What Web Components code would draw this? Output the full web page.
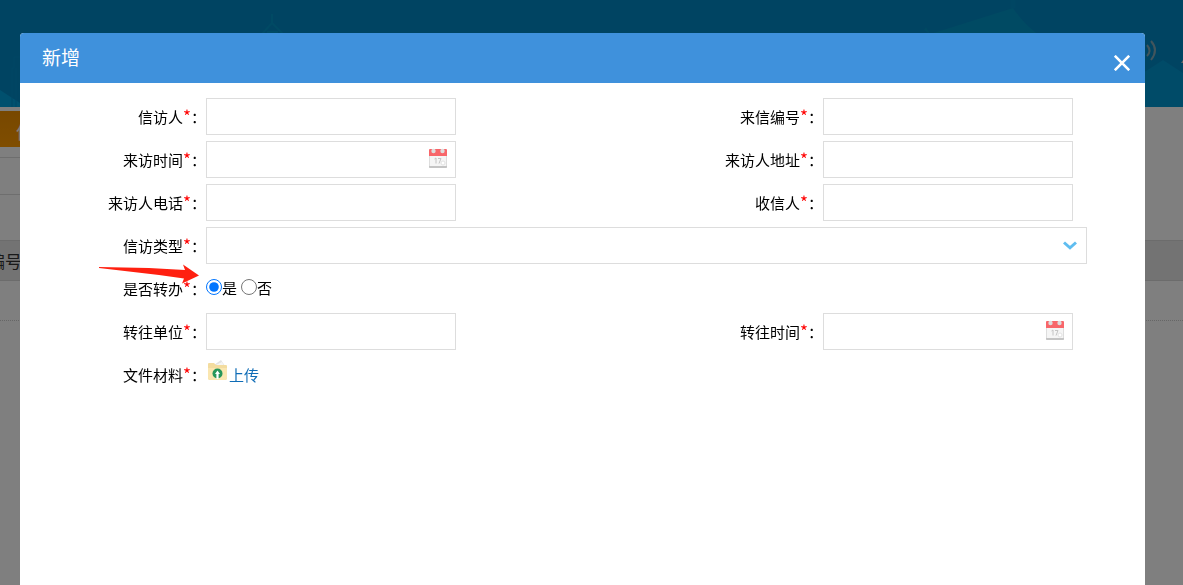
<!DOCTYPE html>
<html lang="zh-CN">
<head>
<meta charset="utf-8">
<meta name="viewport" content="width=device-width, initial-scale=1">
<title>新增</title>
<style>
    body {
        margin: 0;
        height: 100vh;
        overflow: hidden;
        background: #fff;
        color: #000;
        font: 15px/20px "Noto Sans CJK SC", "Liberation Sans", sans-serif;
    }
</style>
</head>
<body>
    <petition-list></petition-list>
    <modal-dialog heading="新增">
        <petition-form></petition-form>
    </modal-dialog>

<script>
// The list page that stays behind the dialog
class PetitionList extends HTMLElement {
    constructor() {
        super();
        this.attachShadow({ mode: "open" });
    }

    connectedCallback() {
        this.shadowRoot.innerHTML = /*html*/ `
            <header>
                <svg width="300" height="107" viewBox="0 0 300 107" aria-hidden="true">
                    <path d="M0 90 L20 103 L48 107 H0Z" fill="#00a0dc"/>
                    <path d="M12 107 V68 H14 V57 H24 V107 M16 107 V68" fill="none" stroke="#008dca"/>
                    <path d="M272 14 V23 L262 34 M272 23 L283 34 M267 32 H278" fill="none" stroke="#0094c8" stroke-width="2"/>
                </svg>
                <svg width="303" height="107" viewBox="0 0 303 107" aria-hidden="true">
                    <path d="M44 36 L133 8 Q145 26 163 38Z" fill="#0094c6"/>
                    <path d="M44 30 L46 27 L50 34" fill="#0092c4"/>
                    <path d="M133 0 V8" stroke="#008dc6" stroke-width="5"/>
                    <path d="M255 78 L283 60 L303 73 V107 H255Z" fill="#0096d0"/>
                    <path d="M267 45 q5 6 0 11 M271 41 q8 9 0 19" fill="none" stroke="#84aab8" stroke-width="2"/>
                    <path d="M301 63 l2 -3 v3z" fill="#ccc"/>
                </svg>
            </header>
            <nav><a href="#list">信访</a></nav>
            <div class="filter"></div>
            <div class="tools"></div>
            <table>
                <thead><tr><th>编号</th></tr></thead>
                <tbody><tr><td></td></tr></tbody>
            </table>
            ${this.getStyle()}
        `;
    }

    getStyle() {
        return /*html*/ `
            <style>
                :host {
                    display: block;
                }
                header {
                    display: flex;
                    justify-content: space-between;
                    height: 107px;
                    background: #0088c4;
                }
                nav {
                    display: flex;
                    width: 90%;
                    height: 36px;
                    padding: 4px 0 10px;
                    border-bottom: 1px solid #ddd;
                }
                nav a {
                    width: 120px;
                    padding-left: 16px;
                    background: linear-gradient(#f09000, #ff9b00);
                    color: #fff;
                    font-size: 18px;
                    line-height: 40px;
                    text-decoration: none;
                }
                .filter {
                    width: 90%;
                    height: 36px;
                    border-bottom: 1px solid #ddd;
                }
                .tools {
                    height: 45px;
                }
                table {
                    width: calc(100% + 12px);
                    margin-left: -12px;
                    border-collapse: collapse;
                    font-size: 17px;
                }
                th {
                    height: 39px;
                    padding: 0;
                    border: solid #d8d8d8;
                    border-width: 1px 0;
                    background: #e6e6e6;
                    color: #333;
                    font-weight: 400;
                    text-align: left;
                }
                td {
                    height: 39px;
                    padding: 0;
                    border-bottom: 1px dotted #ccc;
                }
            </style>
        `;
    }
}

class ModalDialog extends HTMLElement {
    constructor() {
        super();
        this.attachShadow({ mode: "open" });
    }

    connectedCallback() {
        this.shadowRoot.innerHTML = /*html*/ `
            <section role="dialog" aria-labelledby="heading">
                <header>
                    <h1 id="heading">${this.getAttribute("heading")}</h1>
                    <button type="button" aria-label="关闭">
                        <svg width="16" height="16" viewBox="0 0 16 16">
                            <path d="M.8 .8 L15.2 15.2 M15.2 .8 L.8 15.2" stroke="#fff" stroke-width="2.6"/>
                        </svg>
                    </button>
                </header>
                <slot></slot>
            </section>
            ${this.getStyle()}
        `;
        this.shadowRoot.querySelector("button").addEventListener("click", () => this.remove());
    }

    getStyle() {
        return /*html*/ `
            <style>
                :host {
                    position: fixed;
                    inset: 0;
                    display: flex;
                    padding: 33px 38px 0 20px;
                    background: rgba(0, 0, 0, .5);
                }
                section {
                    flex: 1;
                    overflow: hidden;
                    border-radius: 4px 4px 0 0;
                    background: #fff;
                }
                header {
                    display: flex;
                    align-items: center;
                    justify-content: space-between;
                    height: 50px;
                    padding: 0 15px 0 22px;
                    background: #3f91dc;
                    color: #fff;
                }
                h1 {
                    margin: 0;
                    padding-bottom: 2px;
                    font-size: 19px;
                    font-weight: 400;
                }
                button {
                    display: flex;
                    margin: 0;
                    padding: 10px 0 0;
                    border: 0;
                    background: none;
                    cursor: pointer;
                }
            </style>
        `;
    }
}

// One row of the form: label on the left, control on the right
// type: text | date | select | radio | upload
class FormField extends HTMLElement {
    constructor() {
        super();
        this.attachShadow({ mode: "open" });
    }

    getControl(type) {
        switch (type) {
            case "date":
                return /*html*/ `
                    <div class="box">
                        <input id="control" type="text">
                        <button type="button" aria-label="选择日期">
                            <svg width="18" height="20" viewBox="0 0 18 20">
                                <rect y="2" width="18" height="18" rx="1" fill="#ddd"/>
                                <rect x="1" y="8" width="16" height="10" fill="#f5f5f5"/>
                                <path d="M0 8 V2 Q0 1 1 1 H17 Q18 1 18 2 V8Z" fill="#f8666a"/>
                                <path d="M0 18 H18 V19 Q18 20 17 20 H1 Q0 20 0 19Z" fill="#c4c4c4"/>
                                <circle cx="4.5" cy="3" r="2.2" fill="#ddd"/>
                                <circle cx="13.5" cy="3" r="2.2" fill="#ddd"/>
                                <path d="M5.5 11 L7 10 V15.5 M9 10.5 H12 L10 15.5" fill="none" stroke="#c4c4c4"/>
                                <circle cx="14" cy="15" r="2" fill="#fff" stroke="#e2e2e2"/>
                            </svg>
                        </button>
                    </div>`;
            case "select":
                return /*html*/ `
                    <div class="box wide">
                        <select id="control"><option></option></select>
                        <svg class="chevron" width="14" height="9" viewBox="0 0 14 9" aria-hidden="true">
                            <path d="M1 1.5 L7 6.8 L13 1.5" fill="none" stroke="#5fbdf0" stroke-width="3"/>
                        </svg>
                    </div>`;
            case "radio":
                return /*html*/ `
                    <div class="line" role="radiogroup" aria-labelledby="name">
                        <label><input type="radio" name="choice" checked>是</label>
                        <label><input type="radio" name="choice">否</label>
                    </div>
                    <svg class="arrow" width="101" height="20" viewBox="0 0 101 20" aria-hidden="true">
                        <path d="M0 3 L50 4 L86 6 L84 .5 L100 11.5 L83 19.5 L85 14.5 L60 11 L0 4Z" fill="#ff2010"/>
                    </svg>`;
            case "upload":
                return /*html*/ `
                    <a href="#upload">
                        <svg width="23" height="30" viewBox="0 0 23 30" aria-hidden="true">
                            <path d="M8 5 L15 0 L19 6 L17 9 H8Z" fill="#e3e3e3"/>
                            <path d="M10 5 L16 2 L18 6Z" fill="#f6f6f6"/>
                            <path d="M2 4 Q2 3 3 3 H8 L10 5 H20 Q21 5 21 6 V18 Q21 20 19 20 H4 Q2 20 2 18Z" fill="#f3dc9f"/>
                            <path d="M2 8 H21 V18 Q21 20 19 20 H4 Q2 20 2 18Z" fill="#fae6b0"/>
                            <circle cx="11.5" cy="13.5" r="5" fill="#27965a"/>
                            <path d="M11.5 10.5 L14 14 H12.6 V19 H10.4 V14 H9Z" fill="#fff"/>
                        </svg>上传</a>`;
            default:
                return /*html*/ `<div class="box"><input id="control" type="text"></div>`;
        }
    }

    connectedCallback() {
        const type = this.getAttribute("type") || "text";
        const text = `<slot></slot><i>*</i>：`;
        // radio and upload have no single control to tie the label to
        const label = type === "radio" || type === "upload"
            ? `<span class="name" id="name">${text}</span>`
            : `<label class="name" for="control">${text}</label>`;
        this.shadowRoot.innerHTML = label + this.getControl(type) + this.getStyle();
    }

    getStyle() {
        return /*html*/ `
            <style>
                :host {
                    position: relative;
                    display: grid;
                    grid-template-columns: 186px 1fr;
                    align-items: center;
                    height: 37px;
                }
                .name {
                    text-align: right;
                }
                i {
                    color: #f00;
                    font-size: 17px;
                    font-style: normal;
                    line-height: 1;
                }
                .box {
                    box-sizing: border-box;
                    display: flex;
                    align-items: center;
                    width: 250px;
                    height: 37px;
                    border: 1px solid #ddd;
                    background: #fff;
                }
                .box.wide {
                    position: relative;
                    width: 100%;
                }
                .box input, select {
                    flex: 1;
                    min-width: 0;
                    height: 35px;
                    box-sizing: border-box;
                    padding: 0 8px;
                    border: 0;
                    background: none;
                    font: inherit;
                    outline: 0;
                    appearance: none;
                }
                .chevron {
                    position: absolute;
                    right: 9px;
                    top: 13px;
                    pointer-events: none;
                }
                button {
                    display: flex;
                    padding: 0 8px 3px;
                    border: 0;
                    background: none;
                    cursor: pointer;
                }
                .line {
                    display: flex;
                    gap: 4px;
                    padding-bottom: 2px;
                }
                .line label {
                    display: flex;
                    align-items: center;
                }
                .line input {
                    width: 16px;
                    height: 16px;
                    margin: 0 0 2px;
                }
                .arrow {
                    position: absolute;
                    left: 79px;
                    top: -6px;
                }
                a {
                    display: flex;
                    align-items: center;
                    color: #0f6cb6;
                    text-decoration: none;
                }
            </style>
        `;
    }
}

class PetitionForm extends HTMLElement {
    constructor() {
        super();
        this.attachShadow({ mode: "open" });
    }

    connectedCallback() {
        this.shadowRoot.innerHTML = /*html*/ `
            <form>
                <form-field>信访人</form-field>
                <form-field>来信编号</form-field>
                <form-field type="date">来访时间</form-field>
                <form-field>来访人地址</form-field>
                <form-field>来访人电话</form-field>
                <form-field>收信人</form-field>
                <form-field class="full" type="select">信访类型</form-field>
                <form-field class="full" type="radio">是否转办</form-field>
                <form-field>转往单位</form-field>
                <form-field type="date">转往时间</form-field>
                <form-field class="full" type="upload">文件材料</form-field>
            </form>
            ${this.getStyle()}
        `;
    }

    getStyle() {
        return /*html*/ `
            <style>
                :host {
                    display: block;
                    padding: 15px 58px 15px 0;
                }
                form {
                    display: grid;
                    grid-template-columns: 1fr 450px;
                    row-gap: 6px;
                }
                .full {
                    grid-column: 1 / -1;
                }
            </style>
        `;
    }
}

customElements.define("petition-list", PetitionList);
customElements.define("modal-dialog", ModalDialog);
customElements.define("form-field", FormField);
customElements.define("petition-form", PetitionForm);
</script>
</body>
</html>
